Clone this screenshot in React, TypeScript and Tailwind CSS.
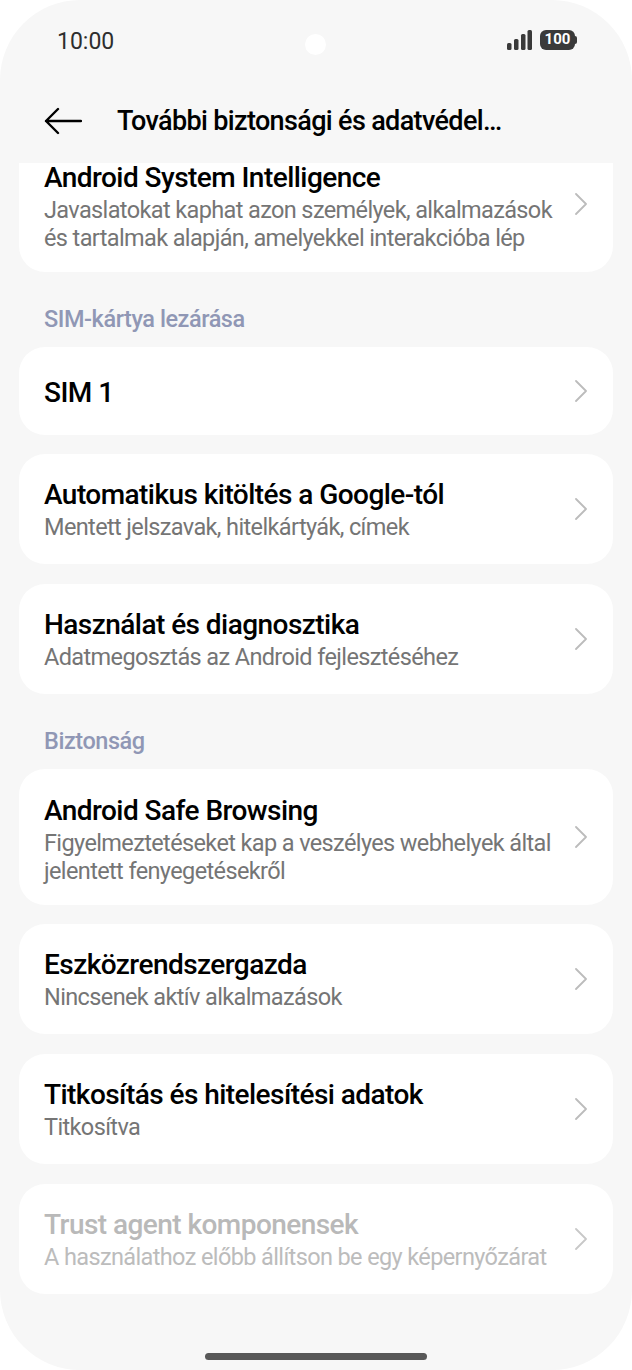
const rows = {
  intelligence: {
    title: "Android System Intelligence",
    sub: ["Javaslatokat kaphat azon személyek, alkalmazások", "és tartalmak alapján, amelyekkel interakcióba lép"],
  },
  autofill: { title: "Automatikus kitöltés a Google-tól", sub: ["Mentett jelszavak, hitelkártyák, címek"] },
  usage: { title: "Használat és diagnosztika", sub: ["Adatmegosztás az Android fejlesztéséhez"] },
  safe: {
    title: "Android Safe Browsing",
    sub: ["Figyelmeztetéseket kap a veszélyes webhelyek által", "jelentett fenyegetésekről"],
  },
  admin: { title: "Eszközrendszergazda", sub: ["Nincsenek aktív alkalmazások"] },
  crypt: { title: "Titkosítás és hitelesítési adatok", sub: ["Titkosítva"] },
};

function Chevron({ muted }: { muted?: boolean }) {
  return (
    <svg width="14" height="24" viewBox="0 0 14 24" fill="none" className="shrink-0">
      <path
        d="M3 2 L13 12 L3 22"
        stroke={muted ? "#c8c8c8" : "#bcbcbc"}
        strokeWidth="1.8"
        strokeLinecap="round"
        strokeLinejoin="round"
      />
    </svg>
  );
}

function Row({ title, sub, muted, className }: { title: string; sub: string[]; muted?: boolean; className?: string }) {
  return (
    <div className={`flex items-center justify-between rounded-[26px] bg-white pl-[25px] pr-[26px] ${className ?? ""}`}>
      <div className={sub.length > 1 ? "pt-[6px]" : "pt-[3px]"}>
        <div className={`text-[28px] leading-[30px] [font-weight:480] tracking-[-0.55px] ${muted ? "text-[#b9b9b9]" : "text-black"}`}>{title}</div>
        <div className={`mt-[3px] text-[23.5px] leading-[28px] tracking-[-0.62px] ${muted ? "text-[#bcbcbc]" : "text-[#757575]"}`}>
          {sub.map((line) => (
            <div key={line} className="whitespace-nowrap">
              {line}
            </div>
          ))}
        </div>
      </div>
      <Chevron muted={muted} />
    </div>
  );
}

function Label({ children }: { children: string }) {
  return <div className="pl-[25px] text-[23.5px] leading-[24px] font-medium tracking-[-0.45px] text-[#9097b5]">{children}</div>;
}

export default function App() {
  return (
    <div className="h-[1370px] w-[632px] bg-white font-['Roboto',sans-serif]">
      <div className="flex h-full flex-col overflow-hidden rounded-[80px] bg-[#f7f7f7]">
        <div className="relative flex h-[82px] shrink-0 items-center justify-between pl-[57px] pr-[55px]">
          <span className="text-[23px] leading-none text-[#2e2e2e]">10:00</span>
          <div className="absolute left-[305px] top-[34px] h-[21px] w-[21px] rounded-full bg-white" />
          <div className="flex items-center gap-[8px] pb-[3px]">
            <svg width="25" height="20" viewBox="0 0 25 20" fill="#3a3a3a">
              <rect x="0" y="13" width="4.5" height="7" rx="1.5" />
              <rect x="7" y="9" width="4.5" height="11" rx="1.5" />
              <rect x="14" y="4" width="4.5" height="16" rx="1.5" />
              <rect x="20.5" y="0" width="4.5" height="20" rx="1.5" />
            </svg>
            <div className="flex items-center">
              <div className="flex h-[20px] w-[35px] items-center justify-center rounded-[6px] bg-[#3a3a3a] text-[15px] leading-none font-bold text-white">
                100
              </div>
              <div className="h-[8px] w-[2px] rounded-r-full bg-[#3a3a3a]" />
            </div>
          </div>
        </div>
        <div className="flex h-[81px] shrink-0 items-center pl-[44px] pb-[4px]">
          <svg width="38" height="28" viewBox="0 0 38 28" fill="none">
            <path d="M37 14 H2 M14 2 L2 14 L14 26" stroke="#000" strokeWidth="2.4" strokeLinecap="round" strokeLinejoin="round" />
          </svg>
          <h1 className="ml-[35px] text-[27px] leading-[32px] [font-weight:480] tracking-[-0.65px] text-black">További biztonsági és adatvédel…</h1>
        </div>
        <div className="flex min-h-0 flex-1 flex-col overflow-hidden px-[19px]">
          <Row {...rows.intelligence} className="-mt-[27px] h-[136px] shrink-0" />
          <div className="mt-[35px] mb-[16px]">
            <Label>SIM-kártya lezárása</Label>
          </div>
          <div className="flex h-[88px] shrink-0 items-center justify-between rounded-[26px] bg-white pl-[25px] pr-[26px]">
            <div className="pt-[4px] text-[28px] leading-[30px] [font-weight:480] tracking-[-0.55px] text-black">SIM 1</div>
            <Chevron />
          </div>
          <Row {...rows.autofill} className="mt-[19px] h-[110px] shrink-0" />
          <Row {...rows.usage} className="mt-[20px] h-[110px] shrink-0" />
          <div className="mt-[35px] mb-[16px]">
            <Label>Biztonság</Label>
          </div>
          <Row {...rows.safe} className="h-[136px] shrink-0" />
          <Row {...rows.admin} className="mt-[19px] h-[110px] shrink-0" />
          <Row {...rows.crypt} className="mt-[20px] h-[110px] shrink-0" />
          <Row
            title="Trust agent komponensek"
            sub={["A használathoz előbb állítson be egy képernyőzárat"]}
            muted
            className="mt-[20px] h-[110px] shrink-0"
          />
          <div className="mt-[59px] h-[7px] w-[222px] shrink-0 self-center rounded-full bg-[#585858]" />
        </div>
      </div>
    </div>
  );
}
